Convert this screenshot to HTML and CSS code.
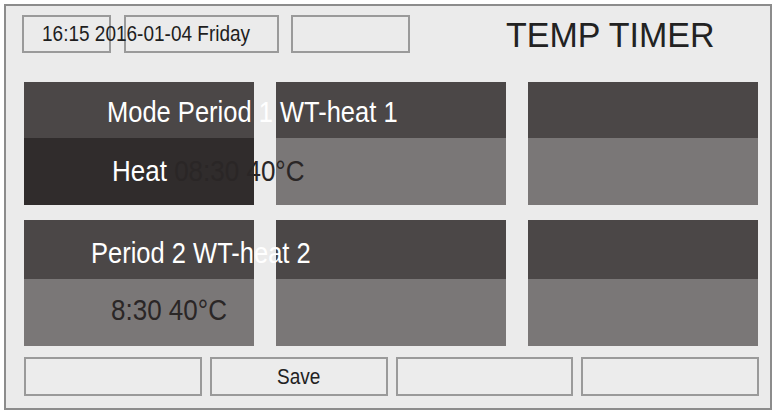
FILE: index.html
```html
<!DOCTYPE html>
<html lang="en">

<head>
    <title>Temp Timer</title>
    <link rel="stylesheet" href="styles.css">
</head>

<body>
    <div class="frame">
        <div class="topbar">
            <div class="box box-time"><span class="clock">16:15 2016-01-04 Friday</span></div>
            <div class="box box-date"></div>
            <div class="box box-extra"></div>
            <div class="title">TEMP TIMER</div>
        </div>

        <div class="cards">
            <div class="card card-active">
                <div class="card-head"><span class="label head-1">Mode Period 1 WT-heat 1</span></div>
                <div class="card-body"><span class="label body-1"><span class="light">Heat</span> 08:30 40°C</span></div>
            </div>
            <div class="card">
                <div class="card-head"></div>
                <div class="card-body"></div>
            </div>
            <div class="card">
                <div class="card-head"></div>
                <div class="card-body"></div>
            </div>

            <div class="card card-tall">
                <div class="card-head"><span class="label head-2">Period 2 WT-heat 2</span></div>
                <div class="card-body"><span class="label body-2">8:30 40°C</span></div>
            </div>
            <div class="card card-tall">
                <div class="card-head"></div>
                <div class="card-body"></div>
            </div>
            <div class="card card-tall">
                <div class="card-head"></div>
                <div class="card-body"></div>
            </div>
        </div>

        <div class="button-row">
            <button></button>
            <button><span class="btn-text">Save</span></button>
            <button></button>
            <button></button>
        </div>
    </div>
</body>

</html>
```

FILE: styles.css
```css
body {
    margin: 0;
    background: #ffffff;
    font-family: 'Liberation Sans', Arial, sans-serif;
    color: #222;
}

.frame {
    box-sizing: border-box;
    margin: 4px;
    width: 768px;
    height: 406px;
    border: 2px solid #8c8c8c;
    background: #ebebeb;
    padding: 9px 0 0 16px;
}

.topbar {
    display: flex;
    align-items: center;
    height: 38px;
}

.box {
    box-sizing: border-box;
    height: 38px;
    border: 2px solid #9a9a9a;
    white-space: nowrap;
}

.box-time {
    width: 89px;
    padding-left: 18px;
    line-height: 34px;
    font-size: 19px;
    color: #1e1e1e;
}

.clock {
    display: inline-block;
    transform: scaleY(1.15);
}

.box-date {
    width: 155px;
    margin-left: 13px;
}

.box-extra {
    width: 119px;
    margin-left: 12px;
}

.title {
    margin-left: 96px;
    font-size: 34px;
    color: #222;
    transform: scaleY(1.05);
}

.cards {
    display: grid;
    grid-template-columns: repeat(3, 230px);
    grid-template-rows: 123px 126px;
    column-gap: 22px;
    row-gap: 15px;
    margin: 29px 0 0 2px;
}

.card {
    display: flex;
    flex-direction: column;
    background: #7a7777;
}

.card-head {
    height: 56px;
    background: #4b4747;
    white-space: nowrap;
}

.card-tall .card-head {
    height: 59px;
}

.card-body {
    flex: 1;
    white-space: nowrap;
    display: flex;
    align-items: center;
}

.card-active .card-body {
    background: #302c2c;
}

.label {
    position: relative;
    z-index: 1;
    display: inline-block;
    font-size: 25.5px;
    transform: scaleY(1.15);
}

.card-head .label {
    line-height: 60px;
    color: #ffffff;
}

.card-tall .card-head .label {
    line-height: 66px;
}

.head-1 {
    margin-left: 83px;
}

.head-2 {
    margin-left: 67px;
}

.card-body .label {
    font-size: 26px;
    color: #2a2626;
}

.body-1 {
    margin-left: 88px;
}

.body-2 {
    margin-left: 87px;
    margin-top: -5px;
}

.light {
    color: #ffffff;
}

.button-row {
    display: grid;
    grid-template-columns: repeat(4, 1fr);
    gap: 8px;
    width: 735px;
    margin: 11px 0 0 2px;
}

.button-row button {
    box-sizing: border-box;
    height: 39px;
    border: 2px solid #9a9a9a;
    background: #ececec;
    font-family: 'Liberation Sans', Arial, sans-serif;
    font-size: 19px;
    color: #222;
    padding: 0;
}

.btn-text {
    display: inline-block;
    transform: scaleY(1.12);
}
```
